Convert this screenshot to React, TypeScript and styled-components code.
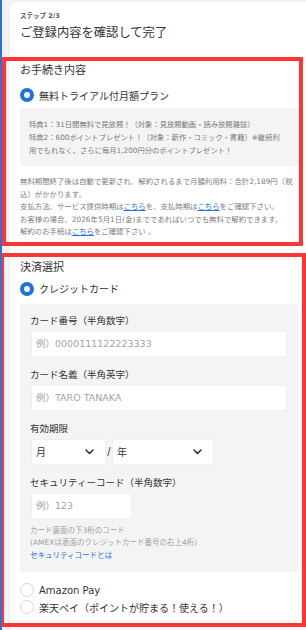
import React from "react";
import styled, { createGlobalStyle } from "styled-components";

const FONT = `"DejaVu Sans", "Noto Sans CJK JP", sans-serif`;

const GlobalStyle = createGlobalStyle`
  html, body { margin: 0; padding: 0; }
  body {
    background: #f1f2f4;
    font-family: ${FONT};
    color: #333;
  }
  * { box-sizing: border-box; }
`;

const Screen = styled.div`
  position: relative;
  width: 306px;
  height: 630px;
  overflow: hidden;
  background: #f1f2f4;
  border-left: 2px solid #2f6fd8;
`;

const Card = styled.div`
  margin: 2px 0 0 8px;
  min-height: 640px;
  background: #fff;
  border-radius: 8px 0 0 0;
  padding: 8px 8px 0 10px;
`;

const Step = styled.div`
  font-size: 6.5px;
  line-height: 12px;
  font-weight: 700;
  color: #555;
`;

const Heading = styled.h1`
  margin: 2px 0 0;
  font-size: 12.3px;
  line-height: 18px;
  font-weight: 400;
  color: #333;
`;

const Section = styled.section<{ $top: number }>`
  margin-top: ${(p) => p.$top}px;
`;

const SectionTitle = styled.h2`
  margin: 0;
  font-size: 11px;
  line-height: 16px;
  font-weight: 400;
  color: #333;
`;

const RadioRow = styled.label<{ $top: number }>`
  display: flex;
  align-items: center;
  gap: 5px;
  height: 16px;
  margin-top: ${(p) => p.$top}px;
  font-size: 10px;
  color: #333;
`;

const Radio = styled.span<{ $checked?: boolean }>`
  flex: none;
  width: 14px;
  height: 14px;
  border-radius: 50%;
  background: #fff;
  border: ${(p) => (p.$checked ? "4px solid #1a73e3" : "1px solid #d6d6d6")};
`;

const InfoBox = styled.div`
  margin-top: 5px;
  background: #f4f4f4;
  border-radius: 3px;
  padding: 10px 9px 9px;
  font-size: 7.3px;
  line-height: 13px;
  color: #7a7a7a;
`;

const Line = styled.div`
  white-space: nowrap;
`;

const Notes = styled.div`
  margin-top: 10px;
  font-size: 7.4px;
  line-height: 12.5px;
  color: #7d7d7d;
`;

const Link = styled.a`
  color: #1a73e3;
  text-decoration: underline;
`;

const Panel = styled.div`
  margin-top: 7px;
  background: #f4f4f4;
  border-radius: 3px;
  padding: 10px 11px 10px 10px;
  display: flex;
  flex-direction: column;
`;

const Field = styled.div<{ $first?: boolean }>`
  margin-top: ${(p) => (p.$first ? 0 : 11)}px;
  display: flex;
  flex-direction: column;
  gap: 3px;
`;

const FieldLabel = styled.div`
  font-size: 9.5px;
  line-height: 14px;
  color: #333;
`;

const Input = styled.input<{ $w?: number }>`
  width: ${(p) => (p.$w ? `${p.$w}px` : "auto")};
  margin-left: 1px;
  height: 26px;
  border: 1px solid #efefef;
  border-radius: 2px;
  background: #fff;
  padding: 0 4px;
  font-family: ${FONT};
  font-size: 9.5px;
  color: #333;
  outline: none;
  &::placeholder { color: #a4a4a4; }
`;

const SelectRow = styled.div`
  display: flex;
  align-items: center;
  margin-left: 1px;
`;

const Select = styled.div<{ $w: number }>`
  width: ${(p) => p.$w}px;
  height: 26px;
  background: #fff;
  border: 1px solid #efefef;
  border-radius: 2px;
  display: flex;
  align-items: center;
  justify-content: space-between;
  padding: 0 11px 0 4px;
  font-size: 10px;
  color: #333;
`;

const Slash = styled.span`
  width: 6px;
  text-align: center;
  font-size: 10px;
  color: #333;
`;

const Help = styled.div`
  margin-top: 6px;
  font-size: 7.5px;
  line-height: 12.5px;
  color: #a2a2a2;
`;

const HelpLink = styled.div`
  color: #1a73e3;
`;

const OtherList = styled.div`
  margin-top: 10px;
  display: flex;
  flex-direction: column;
  gap: 1px;
`;

const Highlight = styled.div<{ $l: number; $t: number; $w: number; $h: number }>`
  position: absolute;
  left: ${(p) => p.$l}px;
  top: ${(p) => p.$t}px;
  width: ${(p) => p.$w}px;
  height: ${(p) => p.$h}px;
  border: 4px solid #ff3434;
  pointer-events: none;
`;

const Chevron = () => (
  <svg width="9" height="6" viewBox="0 0 9 6">
    <polyline points="1,1 4.5,4.5 8,1" fill="none" stroke="#333" strokeWidth="1.6" strokeLinecap="round" strokeLinejoin="round" />
  </svg>
);

export default function App() {
  return (
    <>
      <GlobalStyle />
      <Screen>
        <Card>
          <Step>ステップ 2/3</Step>
          <Heading>ご登録内容を確認して完了</Heading>

          <Section $top={21}>
            <SectionTitle>お手続き内容</SectionTitle>
            <RadioRow $top={8}>
              <Radio $checked />
              無料トライアル付月額プラン
            </RadioRow>
            <InfoBox>
              <Line>特典1：31日間無料で見放題！（対象：見放題動画・読み放題雑誌）</Line>
              <Line>特典2：600ポイントプレゼント！（対象：新作・コミック・書籍）※継続利</Line>
              <Line>用でもれなく、さらに毎月1,200円分のポイントプレゼント！</Line>
            </InfoBox>
            <Notes>
              <Line>無料期間終了後は自動で更新され、解約されるまで月額利用料：合計2,189円（税</Line>
              <Line>込）がかかります。</Line>
              <Line>
                支払方法、サービス提供時期は<Link>こちら</Link>を、支払時期は<Link>こちら</Link>をご確認下さい。
              </Line>
              <Line>お客様の場合、2026年5月1日(金)までであればいつでも無料で解約できます。</Line>
              <Line>
                解約のお手続は<Link>こちら</Link>をご確認下さい 。
              </Line>
            </Notes>
          </Section>

          <Section $top={21}>
            <SectionTitle>決済選択</SectionTitle>
            <RadioRow $top={5}>
              <Radio $checked />
              クレジットカード
            </RadioRow>
            <Panel>
              <Field $first>
                <FieldLabel>カード番号（半角数字）</FieldLabel>
                <Input placeholder="例）0000111122223333" />
              </Field>
              <Field>
                <FieldLabel>カード名義（半角英字）</FieldLabel>
                <Input placeholder="例）TARO TANAKA" />
              </Field>
              <Field>
                <FieldLabel>有効期限</FieldLabel>
                <SelectRow>
                  <Select $w={75}>
                    月
                    <Chevron />
                  </Select>
                  <Slash>/</Slash>
                  <Select $w={102}>
                    年
                    <Chevron />
                  </Select>
                </SelectRow>
              </Field>
              <Field>
                <FieldLabel>セキュリティーコード（半角数字）</FieldLabel>
                <Input $w={101} placeholder="例）123" />
              </Field>
              <Help>
                <div>カード裏面の下3桁のコード</div>
                <div>(AMEXは表面のクレジットカード番号の右上4桁)</div>
                <HelpLink>セキュリティコードとは</HelpLink>
              </Help>
            </Panel>
            <OtherList>
              <RadioRow $top={0}>
                <Radio />
                Amazon Pay
              </RadioRow>
              <RadioRow $top={0}>
                <Radio />
                楽天ペイ（ポイントが貯まる！使える！）
              </RadioRow>
            </OtherList>
          </Section>
        </Card>
        <Highlight $l={0} $t={57} $w={301} $h={189} />
        <Highlight $l={-2} $t={253} $w={306} $h={374} />
      </Screen>
    </>
  );
}
